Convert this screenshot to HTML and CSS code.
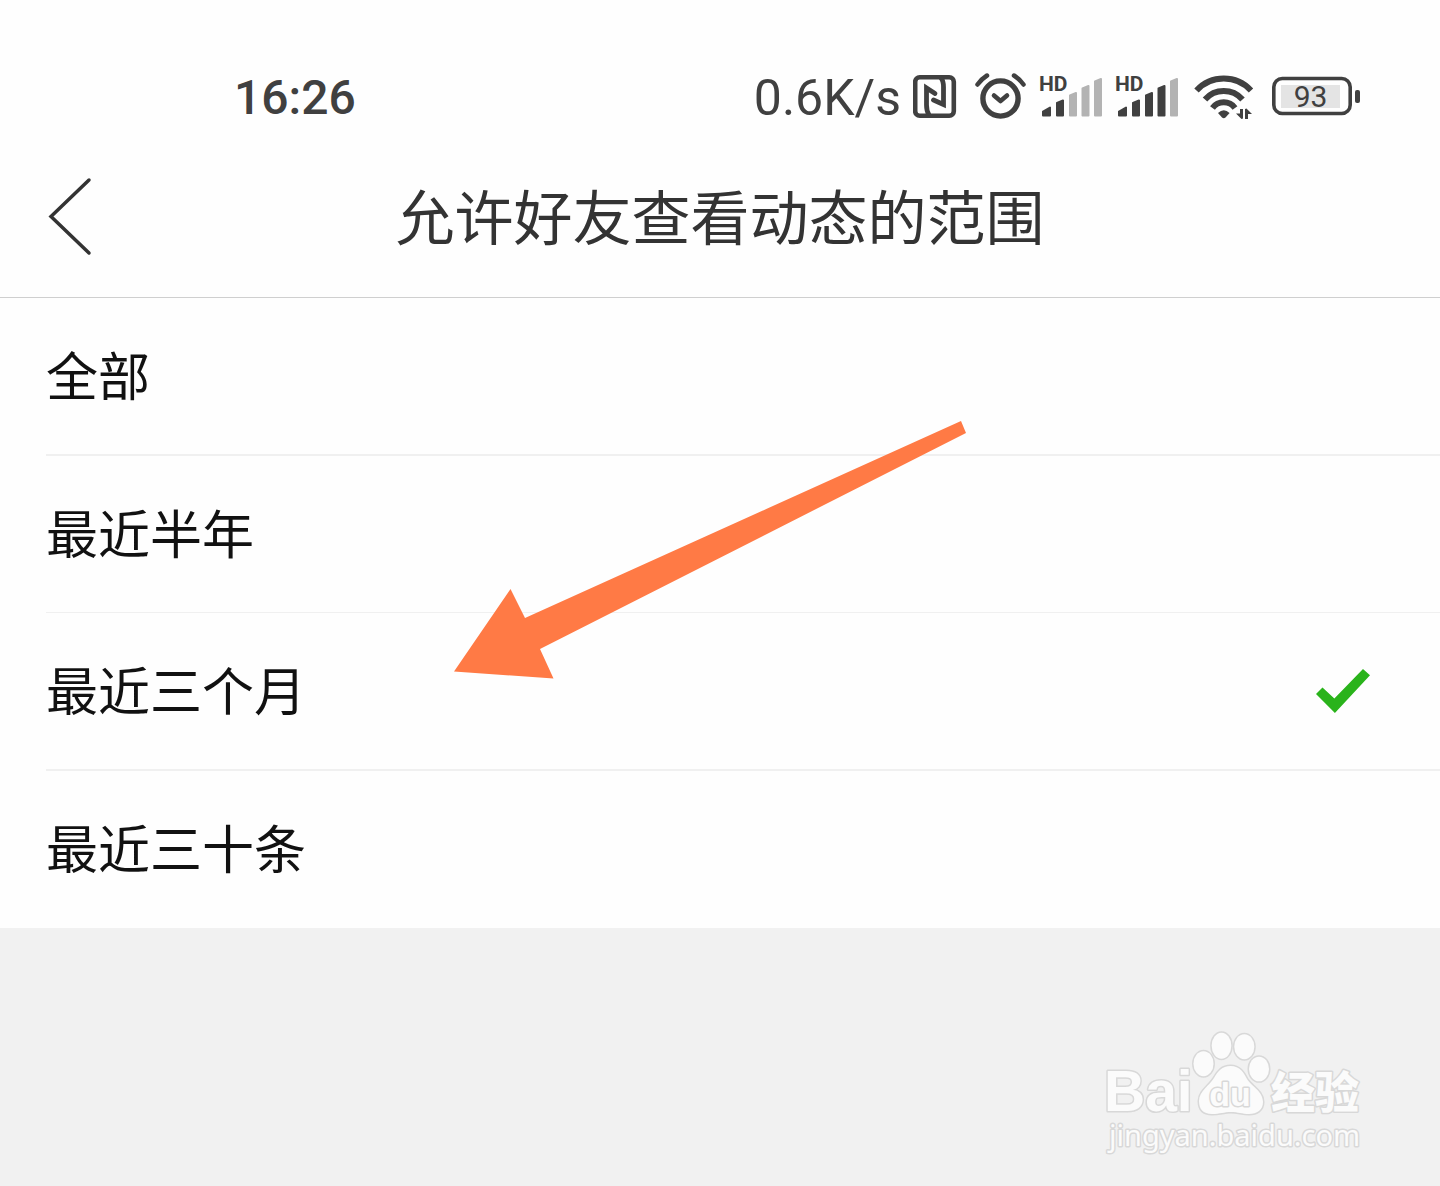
FILE: index.html
```html
<!DOCTYPE html>
<html lang="zh-CN">
<head>
    <meta charset="UTF-8">
    <meta name="viewport" content="width=device-width, initial-scale=1.0">
    <title>允许好友查看动态的范围</title>
    <link rel="stylesheet" href="styles.css">
</head>
<body>
    <div class="status-bar">
        <time class="clock">16:26</time>
        <div class="status-icons">
            <span class="net-speed">0.6K/s</span>
            <!-- NFC -->
            <svg class="icon" width="44" height="48" viewBox="0 0 44 48">
                <rect x="2.2" y="5.2" width="38.6" height="38.6" rx="4.5" stroke-width="4.6"/>
                <path d="M16 43Q13.5 39 13.5 33V16L22 21.5M28 6Q30.5 9 30.5 15V32.5L20.5 28" stroke-width="4.8" stroke-linecap="round"/>
            </svg>
            <!-- Alarm -->
            <svg class="icon" width="58" height="48" viewBox="0 0 58 48">
                <circle cx="31.5" cy="26.5" r="17.6" stroke-width="5.4"/>
                <path d="M25 23.5L31.5 29L38 23.5" stroke-width="4.6" stroke-linecap="round" stroke-linejoin="round"/>
                <path d="M8.5 12.5Q12.5 7 18 3.5M45 3.5Q50.5 7 54.5 12.5" stroke-width="4.5" stroke-linecap="round"/>
            </svg>
            <!-- SIM 1 -->
            <svg class="icon signal" width="64" height="48" viewBox="0 0 64 48">
                <text x="0" y="19">HD</text>
                <path class="on" d="M4 39.5L11 35.5V43.5H4ZM18 31L24 28.5V43.5H18Z"/>
                <path class="off" d="M31 23.5L37 21V43.5H31ZM43.5 16.5L49.5 14V43.5H43.5ZM56 9.5L62 7V43.5H56Z"/>
            </svg>
            <!-- SIM 2 -->
            <svg class="icon signal" width="64" height="48" viewBox="0 0 64 48">
                <text x="0" y="19">HD</text>
                <path class="on" d="M4 39.5L11 35.5V43.5H4ZM18 31L24 28.5V43.5H18ZM31 23.5L37 21V43.5H31ZM43.5 16.5L49.5 14V43.5H43.5Z"/>
                <path class="off" d="M56 9.5L62 7V43.5H56Z"/>
            </svg>
            <!-- Wi-Fi -->
            <svg class="icon" width="69" height="48" viewBox="0 0 69 48">
                <path d="M5.5 18.5A37 37 0 0 1 60 18.5M14 27.5A25 25 0 0 1 51.5 27.5M21.5 36A14 14 0 0 1 44 36" stroke-width="6"/>
                <path class="fill" d="M27 41Q32.8 35.5 38.6 41L34.5 45.5Q32.8 47 31 45.5Z"/>
                <path class="fill" d="M49 37H52V46.5L50.5 47L45 41.5H49ZM54 47H57V42H61L55.5 36.5L54 37Z"/>
            </svg>
            <!-- Battery -->
            <svg class="icon battery" width="88" height="48" viewBox="0 0 88 48">
                <rect x="1.8" y="6.5" width="76.4" height="35" rx="8.5" stroke-width="3.6"/>
                <rect class="level" x="9" y="13" width="59" height="23"/>
                <rect class="fill" x="83" y="18" width="5" height="13" rx="2"/>
                <text x="38.5" y="35">93</text>
            </svg>
        </div>
    </div>

    <header class="header">
        <button class="back" type="button" aria-label="返回">
            <svg width="48" height="80" viewBox="0 0 48 80">
                <path d="M43 3L5 39.5L43 76"/>
            </svg>
        </button>
        <h1>允许好友查看动态的范围</h1>
    </header>

    <main class="options">
        <label class="option"><span>全部</span><input type="radio" name="range"></label>
        <label class="option"><span>最近半年</span><input type="radio" name="range"></label>
        <label class="option"><span>最近三个月</span><input type="radio" name="range" checked></label>
        <label class="option"><span>最近三十条</span><input type="radio" name="range"></label>

        <svg class="pointer" width="512" height="260" viewBox="0 0 512 260">
            <path d="M0 251.5L56.5 169L71 198L507 1L512 13L86 229L99.5 258.5Z"/>
        </svg>
    </main>

    <footer class="footer">
        <svg class="watermark" width="266" height="132" viewBox="0 0 266 132">
            <text class="brand" x="4" y="87">Bai</text>
            <ellipse cx="103.5" cy="39.7" rx="10" ry="12.5"/>
            <ellipse cx="121.5" cy="21.7" rx="9.8" ry="13"/>
            <ellipse cx="144.3" cy="22.7" rx="10" ry="12.5"/>
            <ellipse cx="159" cy="45" rx="10" ry="12.3"/>
            <path d="M130.5 42C140 42 144 49 147 55C151 62 163 67 163 78C163 86 157 90 149 90C142 90 138 88 131 88C124 88 120 90 112 90C103 90 99 85 99 77C99 67 110 61 114 54C118 47 122 42 130.5 42Z"/>
            <text class="du" x="130" y="82">du</text>
            <text class="jingyan" x="171" y="85">经验</text>
            <text class="site" x="9" y="122">jingyan.baidu.com</text>
        </svg>
    </footer>
</body>
</html>
```
FILE: styles.css
```css
:root {
    --ink: #404040;
    --title: #333333;
    --text: #111111;
    --line: #f0f0f0;
    --bg: #f1f1f1;
    --green: #2ab31b;
    --orange: #ff7a45;
}

* {
    box-sizing: border-box;
    margin: 0;
    padding: 0;
}

body {
    display: flex;
    flex-direction: column;
    min-height: 100vh;
    font-family: 'Noto Sans CJK SC', sans-serif;
    background: #fefefe;
    color: var(--text);
}

/* Status bar */
.status-bar {
    display: flex;
    justify-content: space-between;
    align-items: center;
    padding: 54px 80px 0 234px;
    color: var(--ink);
    font-family: Roboto, sans-serif;
    font-size: 50px;
    line-height: 80px;
}

.clock,
.net-speed {
    padding-top: 4px;
}

.clock {
    font-size: 48px;
    font-weight: 500;
}

.status-icons {
    display: flex;
    align-items: center;
    gap: 12px;
}

.icon {
    fill: none;
    stroke: var(--ink);
}

.icon text,
.icon .fill {
    fill: var(--ink);
    stroke: none;
}

.signal text {
    font: 700 21px Roboto, sans-serif;
}

.signal path {
    stroke-width: 2;
    stroke-linejoin: round;
}

.signal .on {
    fill: var(--ink);
}

.signal .off {
    fill: #b3b3b3;
    stroke: #b3b3b3;
}

.battery .level {
    fill: #e4e4e4;
    stroke: none;
}

.battery text {
    font: 400 30px Roboto, sans-serif;
    text-anchor: middle;
}

/* Title bar */
.header {
    display: grid;
    grid-template-columns: 1fr auto 1fr;
    align-items: center;
    padding: 39px 46px 40px;
    border-bottom: 1px solid #cfcfcf;
}

.header h1 {
    padding-bottom: 4px;
    color: var(--title);
    font-size: 59px;
    font-weight: 400;
    line-height: 76px;
}

.back {
    display: flex;
    justify-self: start;
    background: none;
    border: none;
    cursor: pointer;
}

.back path {
    fill: none;
    stroke: var(--title);
    stroke-width: 3.5;
    stroke-linecap: round;
}

/* Options */
.options {
    position: relative;
}

.option {
    display: flex;
    justify-content: space-between;
    align-items: center;
    margin-left: 46px;
    padding: 40px 70px 40px 0;
    border-bottom: 1px solid var(--line);
    font-size: 52px;
    line-height: 72px;
    cursor: pointer;
}

.option:nth-child(odd) {
    border-bottom-width: 2px;
}

.option:last-of-type {
    border-color: transparent;
}

.option span {
    padding-bottom: 4px;
}

.option input {
    appearance: none;
    width: 54px;
    height: 44px;
    cursor: pointer;
}

.option input:checked {
    background: var(--green);
    clip-path: polygon(0 57%, 12% 42%, 34% 67%, 87% 0, 100% 14%, 35% 100%);
}

.pointer {
    position: absolute;
    top: 122px;
    left: 454px;
    fill: var(--orange);
    pointer-events: none;
}

/* Watermark */
.footer {
    display: flex;
    flex: 1;
    justify-content: flex-end;
    align-items: flex-end;
    padding: 30px 74px;
    background: var(--bg);
}

.watermark {
    fill: #fbfbfb;
    stroke: #d8d8d8;
    stroke-width: 3;
    stroke-linejoin: round;
    paint-order: stroke;
}

.brand {
    font: 700 57px 'Liberation Sans', sans-serif;
}

.du {
    font: 700 34px 'Liberation Sans', sans-serif;
    text-anchor: middle;
}

.jingyan {
    font: 900 44px 'Noto Sans CJK SC', sans-serif;
}

.site {
    font: 400 29px 'Noto Sans', sans-serif;
}
```
